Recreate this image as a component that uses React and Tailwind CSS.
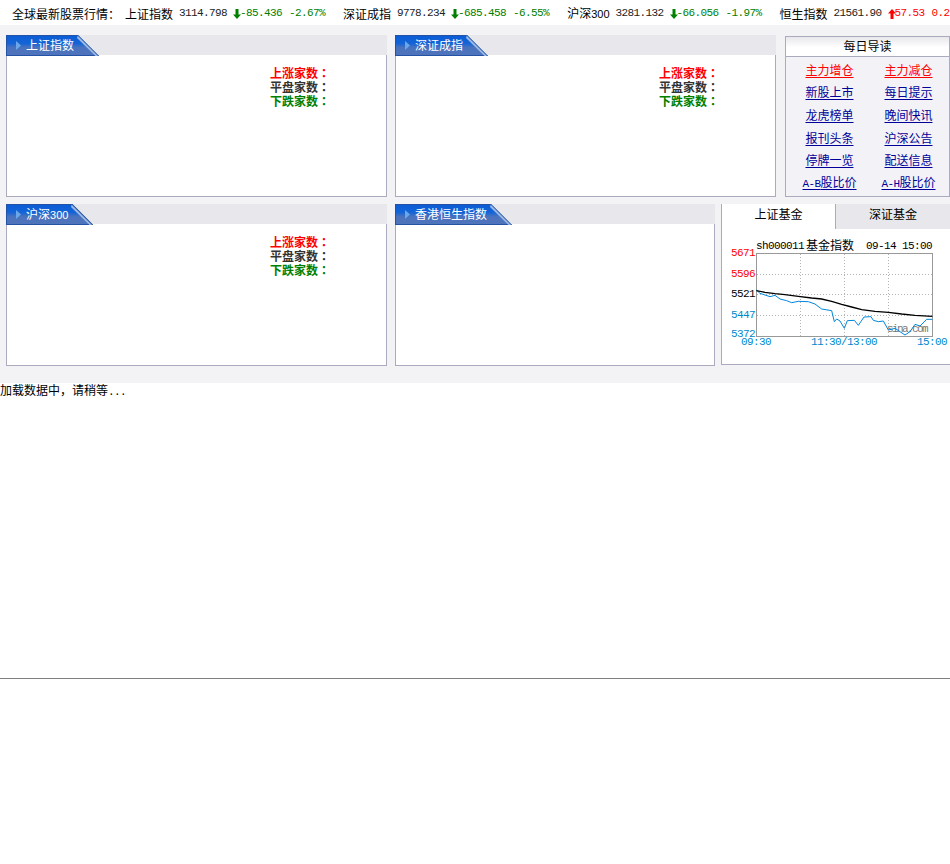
const cjk = "font-['Noto_Sans_CJK_SC',sans-serif]";
const mono = "font-['Liberation_Mono','Noto_Sans_CJK_SC',monospace] text-[11px] tracking-[-0.6px]";
const sansDigits = "font-['Liberation_Sans',sans-serif] text-[11px]";

function Arrow({ up, color }) {
  return (
    <svg width="8" height="10" viewBox="0 0 8 10" className="shrink-0 mr-[-1px]">
      {up ? (
        <polygon points="4,0 8,4.5 5.5,4.5 5.5,10 2.5,10 2.5,4.5 0,4.5" fill={color} />
      ) : (
        <polygon points="4,10 8,5.5 5.5,5.5 5.5,0 2.5,0 2.5,5.5 0,5.5" fill={color} />
      )}
    </svg>
  );
}

function Quote({ name, digits, value, change, pct, up }) {
  const color = up ? "#ff0000" : "#008000";
  return (
    <div className="flex items-center shrink-0 mr-[18px]">
      <span className="text-[12px] text-black">
        {name}
        {digits ? <span className={sansDigits}>{digits}</span> : null}
      </span>
      <span className={`${mono} text-[#222] ml-1.5`}>{value}</span>
      <span className="ml-1.5 flex items-center">
        <Arrow up={up} color={color} />
        <span className={mono} style={{ color }}>{change}</span>
      </span>
      <span className={`${mono} ml-[7px]`} style={{ color }}>{pct}</span>
    </div>
  );
}

function Ticker() {
  return (
    <div className={`${cjk} h-[25px] bg-white flex items-center pl-3 pt-0.5 overflow-hidden whitespace-nowrap`}>
      <span className="text-[12px] text-black w-[113px] shrink-0">全球最新股票行情：</span>
      <Quote name="上证指数" value="3114.798" change="-85.436" pct="-2.67%" />
      <Quote name="深证成指" value="9778.234" change="-685.458" pct="-6.55%" />
      <Quote name="沪深" digits="300" value="3281.132" change="-66.056" pct="-1.97%" />
      <Quote name="恒生指数" value="21561.90" change="57.53" pct="0.27%" up />
    </div>
  );
}

function Tab({ children }) {
  return (
    <div className="relative h-[21px] inline-flex items-center pl-[19px] pr-[25px] text-[12px] text-white border-l border-[#2453a6] [clip-path:polygon(0_0,calc(100%-21px)_0,100%_100%,0_100%)] bg-[linear-gradient(#0a5cd6,#1464d6_40%,#4a72bd_60%,#4f74bb)]">
      <svg className="absolute left-[9px] top-[6px]" width="5" height="9" viewBox="0 0 5 9">
        <polygon points="0,0 5,4.5 0,9" fill="#6aa6ea" />
      </svg>
      <span className="relative top-[-0.5px]">{children}</span>
      <div className="absolute left-0 right-[21px] top-0 h-px bg-[#2453a6]" />
      <div className="absolute left-0 right-0 bottom-0 h-px bg-[#2453a6]" />
      <svg className="absolute right-0 top-0" width="22" height="21" viewBox="0 0 22 21">
        <polygon points="1,0 22,21 18.5,21 0,3" fill="#9cb9e4" />
        <line x1="1" y1="0" x2="22" y2="21" stroke="#2453a6" strokeWidth="1.4" />
      </svg>
    </div>
  );
}

function Stats() {
  const rows = [
    ["上涨家数", "text-[#ff0000]"],
    ["平盘家数", "text-[#333]"],
    ["下跌家数", "text-[#008000]"],
  ];
  return (
    <div className="pl-[263px] pt-[10px]">
      {rows.map(([t, c]) => (
        <div key={t} className={`h-[14px] leading-[14px] text-[12px] font-bold ${c}`}>
          {t}<span className="font-['Noto_Sans_CJK_TC',sans-serif]">：</span>
        </div>
      ))}
    </div>
  );
}

function Panel({ title, width, stats }) {
  return (
    <div className="h-[162px] flex flex-col shrink-0" style={{ width }}>
      <div className="h-[20px] bg-[#e8e8ec] flex shrink-0 border-b border-[#ababc0] box-content -mb-px">
        <Tab>{title}</Tab>
      </div>
      <div className="flex-1 bg-white border border-t-0 border-[#ababc0] pt-px">
        {stats ? <Stats /> : null}
      </div>
    </div>
  );
}

const links = [
  ["主力增仓", "主力减仓", true],
  ["新股上市", "每日提示"],
  ["龙虎榜单", "晚间快讯"],
  ["报刊头条", "沪深公告"],
  ["停牌一览", "配送信息"],
];

function DailyLink({ children, red }) {
  return (
    <a className={`underline underline-offset-2 text-[12px] ${red ? "text-[#ff0000]" : "text-[#000099]"}`}>{children}</a>
  );
}

function Daily() {
  return (
    <div className="w-[165px] h-[161px] mt-px border border-[#ababc0] bg-[#f3f3f7] flex flex-col shrink-0">
      <div className="h-[20px] shrink-0 border-b border-[#ababc0] pb-px bg-[linear-gradient(#e8e8ec,#ffffff_55%)] flex items-center justify-center text-[12px] text-black">
        每日导读
      </div>
      <div className="grid grid-cols-[79px_79px] flex-1 pl-1 pt-[1.5px] auto-rows-[22.6px] justify-items-center items-center">
        {links.map(([a, b, red]) => [
          <DailyLink key={a} red={red}>{a}</DailyLink>,
          <DailyLink key={b} red={red}>{b}</DailyLink>,
        ])}
        <DailyLink><span className={mono}>A-B</span>股比价</DailyLink>
        <DailyLink><span className={mono}>A-H</span>股比价</DailyLink>
      </div>
    </div>
  );
}

const black = [[124,287],[150,292],[180,296],[210,299],[250,304],[290,309],[320,312],[350,319],[380,328],[410,336],[440,344],[480,349],[520,352],[560,357],[600,361],[652,364]];
const blue = [[124,285],[135,295],[150,300],[165,305],[180,301],[195,312],[215,317],[230,323],[250,319],[280,320],[300,327],[320,342],[350,347],[358,380],[365,372],[375,378],[388,400],[397,377],[418,376],[430,391],[447,366],[468,365],[475,376],[490,380],[505,378],[520,405],[540,400],[570,420],[585,410],[600,388],[615,393],[635,373],[652,373]];
const toPts = (p) => p.map(([x, y]) => `${x / 3 + 715},${y / 3 + 195}`).join(" ");

function Chart() {
  const t = { fontFamily: "'Liberation Mono',monospace", fontSize: 11, letterSpacing: "-0.6px" };
  const axis = "#0088cc";
  return (
    <svg width="225" height="112" viewBox="725 238 225 112" className="block ml-[3px] mt-[9px]">
      <text x="756" y="249" style={t} fill="#000">sh000011</text>
      <text x="806" y="250" style={{ fontFamily: "'Noto Sans CJK SC',sans-serif", fontSize: 12 }} fill="#000">基金指数</text>
      <text x="866" y="249" style={t} fill="#000">09-14 15:00</text>
      <g stroke="#b4b4b4" strokeWidth="1" strokeDasharray="1 2" shapeRendering="crispEdges">
        {[800.5, 844.5, 888.5].map((x) => <line key={x} x1={x} x2={x} y1="254" y2="336" />)}
        {[274.5, 294.5, 315.5].map((y) => <line key={y} y1={y} y2={y} x1="757" x2="932" />)}
      </g>
      <rect x="756.5" y="253.5" width="176" height="83" fill="none" stroke="#999" shapeRendering="crispEdges" />
      <text x="887" y="332" style={{ ...t, letterSpacing: "-1.6px" }} fill="#777">sina.com</text>
      <polyline points={toPts(blue)} fill="none" stroke="#0088dd" strokeWidth="1" />
      <polyline points={toPts(black)} fill="none" stroke="#000" strokeWidth="1.3" />
      <text x="731" y="256" style={t} fill="#f00">5671</text>
      <text x="731" y="277" style={t} fill="#f00">5596</text>
      <text x="731" y="297" style={t} fill="#000">5521</text>
      <text x="731" y="318" style={t} fill={axis}>5447</text>
      <text x="731" y="337" style={t} fill={axis}>5372</text>
      <text x="741" y="345" style={t} fill={axis}>09:30</text>
      <text x="811" y="345" style={t} fill={axis}>11:30/13:00</text>
      <text x="917" y="345" style={t} fill={axis}>15:00</text>
    </svg>
  );
}

function FundTabs() {
  return (
    <div className="w-[229px] h-[161px] bg-white border-l border-b border-[#ababc0] shrink-0">
      <div className="flex h-[25px] text-[12px] text-black">
        <div className="w-[113px] bg-white flex items-center justify-center pb-[6px]">上证基金</div>
        <div className="flex-1 bg-[#e8e8ec] border-l border-[#ababc0] flex items-center justify-center pb-[6px]">深证基金</div>
      </div>
      <Chart />
    </div>
  );
}

export default function App() {
  return (
    <div className={`${cjk} w-[950px] h-[864px] bg-white overflow-hidden`}>
      <Ticker />
      <div className="h-[358px] bg-[#f3f3f5] pt-[10px] pl-1.5 flex flex-col gap-[7px]">
        <div className="flex">
          <Panel title="上证指数" width={381} stats />
          <div className="w-2 shrink-0" />
          <Panel title="深证成指" width={381} stats />
          <div className="w-[9px] shrink-0" />
          <Daily />
        </div>
        <div className="flex">
          <Panel title={<>沪深<span className={sansDigits}>300</span></>} width={381} stats />
          <div className="w-2 shrink-0" />
          <Panel title="香港恒生指数" width={320} />
          <div className="w-1.5 shrink-0" />
          <FundTabs />
        </div>
      </div>
      <div className="h-[14px] leading-[13px] text-[12px] text-black whitespace-nowrap">
        加载数据中，请稍等<span className={mono}>...</span>
      </div>
      <div className="mt-[281px] h-px bg-[#808080]" />
    </div>
  );
}
